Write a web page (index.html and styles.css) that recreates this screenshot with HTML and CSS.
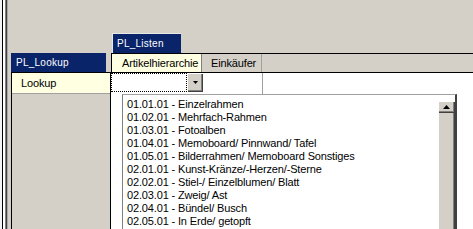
FILE: index.html
```html
<!DOCTYPE html>
<html>
<head>
<meta charset="utf-8">
<link rel="stylesheet" href="styles.css">
</head>
<body>
<div class="screen">
  <div class="edge"></div>
  <div class="left">
    <div class="hdr lookup-hdr">PL_Lookup</div>
    <div class="lpanel">
      <div class="lrow">Lookup</div>
    </div>
  </div>
  <div class="right">
    <div class="hdr listen-hdr">PL_Listen</div>
    <div class="tabbar">
      <div class="tab active">Artikelhierarchie</div>
      <div class="tab">Einkäufer</div>
    </div>
    <div class="page">
      <div class="filter">
        <div class="combo-input"></div>
        <div class="combo-btn"><svg width="5" height="3" viewBox="0 0 5 3"><polygon points="0,0 5,0 2.5,3" fill="#000"/></svg></div>
      </div>
      <div class="list">
        <div class="items">
          <div class="item">01.01.01 - Einzelrahmen</div>
          <div class="item">01.02.01 - Mehrfach-Rahmen</div>
          <div class="item">01.03.01 - Fotoalben</div>
          <div class="item">01.04.01 - Memoboard/ Pinnwand/ Tafel</div>
          <div class="item">01.05.01 - Bilderrahmen/ Memoboard Sonstiges</div>
          <div class="item">02.01.01 - Kunst-Kränze/-Herzen/-Sterne</div>
          <div class="item">02.02.01 - Stiel-/ Einzelblumen/ Blatt</div>
          <div class="item">02.03.01 - Zweig/ Ast</div>
          <div class="item">02.04.01 - Bündel/ Busch</div>
          <div class="item">02.05.01 - In Erde/ getopft</div>
        </div>
        <div class="vscroll">
          <div class="sbtn"><svg width="7" height="4" viewBox="0 0 7 4"><polygon points="3.5,0 7,4 0,4" fill="#000"/></svg></div>
          <div class="thumb"></div>
        </div>
      </div>
    </div>
  </div>
</div>
</body>
</html>
```
FILE: styles.css
```css
html, body {
  margin: 0;
  padding: 0;
  background: #d4d0c8;
}
.screen {
  display: flex;
  width: 473px;
  height: 229px;
  overflow: hidden;
  background: #d4d0c8;
  font-family: "Liberation Sans", Arial, sans-serif;
  font-size: 11px;
  letter-spacing: -0.15px;
  color: #000;
}
.edge {
  flex: none;
  width: 8px;
  background: linear-gradient(to right, #f4f4f4 0 2px, #000 2px 3px, #fff 3px 5px, #808080 5px 6px, #404040 6px 7px, #a8a8a8 7px 8px);
}
.left {
  flex: none;
  width: 100px;
  margin-left: 3px;
  padding-top: 53px;
  display: flex;
  flex-direction: column;
}
.hdr {
  background: #0a246a;
  color: #fff;
  font-size: 10px;
  letter-spacing: 0.25px;
  box-sizing: border-box;
}
.lookup-hdr {
  width: 95px;
  height: 19px;
  line-height: 19px;
  padding-left: 5px;
}
.lpanel {
  flex: 1;
  border: 1px solid #000;
  border-bottom: none;
  box-sizing: border-box;
}
.lrow {
  height: 20px;
  line-height: 20px;
  background: #ffffe1;
  padding-left: 9px;
  border-bottom: 1px solid #a0a0a0;
}
.right {
  flex: 1;
  padding-top: 33px;
  display: flex;
  flex-direction: column;
}
.listen-hdr {
  margin-left: 1px;
  width: 69px;
  height: 20px;
  line-height: 19px;
  padding-left: 4px;
  border-top: 1px solid #e8e8e8;
  border-left: 1px solid #e8e8e8;
}
.tabbar {
  display: flex;
  height: 18px;
  border-top: 1px solid #000;
  border-bottom: 1px solid #000;
  border-left: 1px solid #000;
}
.tab {
  box-sizing: border-box;
  line-height: 18px;
  height: 18px;
}
.tab.active {
  width: 89px;
  background: #ffffe1;
  padding-left: 10px;
}
.tab:not(.active) {
  width: 61px;
  padding-left: 9px;
  border-left: 1px solid #808080;
  border-right: 1px solid #a0a0a0;
}
.page {
  flex: 1;
  background: #fff;
}
.filter {
  display: flex;
  width: 152px;
  height: 21px;
  box-sizing: border-box;
  border-right: 1px solid #a0a0a0;
}
.combo-input {
  width: 76px;
  height: 19px;
  box-sizing: border-box;
  border: 1px dotted #000;
}
.combo-btn {
  width: 16px;
  height: 19px;
  margin-left: 0;
  background: #d4d0c8;
  box-shadow: inset 1px 1px #fff, inset -1px -1px #404040, inset -2px -2px #808080;
  display: flex;
  align-items: center;
  justify-content: center;
}
.list {
  display: flex;
  margin-left: 11px;
  width: 335px;
  height: 140px;
  box-sizing: border-box;
  border-top: 1px solid #a0a0a0;
  border-left: 1px solid #808080;
  border-right: 2px solid #404040;
  margin-top: 0;
}
.items {
  flex: 1;
  padding: 3px 0 0 4px;
}
.item {
  height: 13px;
  line-height: 13px;
  white-space: nowrap;
}
.vscroll {
  flex: none;
  width: 17px;
  display: flex;
  flex-direction: column;
  padding-top: 6px;
  background: #fff;
}
.sbtn {
  height: 12px;
  background: #d4d0c8;
  box-shadow: inset 1px 1px #fff, inset -1px -1px #404040, inset -2px -2px #808080;
  display: flex;
  align-items: center;
  justify-content: center;
}
.thumb {
  flex: 1;
  background: #d4d0c8;
  box-shadow: inset 1px 0 #fff, inset -1px 0 #404040, inset -2px 0 #808080;
}
```
